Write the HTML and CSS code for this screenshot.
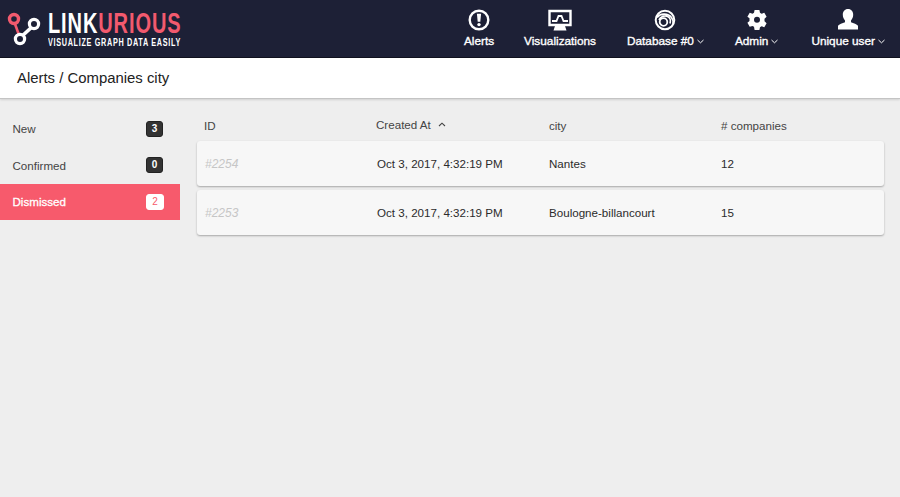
FILE: index.html
```html
<!DOCTYPE html>
<html lang="en">
<head>
<meta charset="utf-8">
<title>Alerts / Companies city</title>
<link rel="stylesheet" href="styles.css">
</head>
<body>
<header class="topbar">
  <div class="logo">
    <svg class="logo-mark" width="36" height="36" viewBox="0 0 36 36">
      <path d="M8 13 L12 24" stroke="#f25a6e" stroke-width="2.600" fill="none"/>
      <circle cx="7" cy="8" r="4.500" fill="none" stroke="#f25a6e" stroke-width="3.400"/>
      <path d="M14 26 L26 15" stroke="#fff" stroke-width="3.600" fill="none"/>
      <circle cx="13" cy="28" r="4.600" fill="#1d2036" stroke="#fff" stroke-width="3.200"/>
      <circle cx="27" cy="13" r="4.600" fill="#1d2036" stroke="#fff" stroke-width="3.200"/>
    </svg>
    <div class="logo-text">
      <div class="logo-name"><span class="logo-link">LINK</span><span class="logo-urious">URIOUS</span></div>
      <div class="logo-tag">VISUALIZE GRAPH DATA EASILY</div>
    </div>
  </div>
  <nav class="nav">
    <a class="nav-item nav-alerts">
      <svg width="22" height="22" viewBox="0 0 22 22"><circle cx="11" cy="11" r="9.300" fill="none" stroke="#fff" stroke-width="2.400"/><path d="M8.900 4.800h4.200l-.8 8h-2.600z" fill="#fff"/><circle cx="11" cy="15.600" r="1.700" fill="#fff"/></svg>
      <span>Alerts</span>
    </a>
    <a class="nav-item nav-vis">
      <svg width="24" height="22" viewBox="0 0 24 22"><path d="M1.500 2h21v14h-21z" fill="none" stroke="#fff" stroke-width="2.400"/><path d="M4 12h4.500l2-5h3l2 5H20" fill="none" stroke="#fff" stroke-width="1.800"/><path d="M7 17h10l1.500 4.500h-13z" fill="#fff"/></svg>
      <span>Visualizations</span>
    </a>
    <a class="nav-item nav-db">
      <svg width="22" height="22" viewBox="0 0 22 22"><circle cx="11" cy="11" r="9.300" fill="none" stroke="#fff" stroke-width="2"/><circle cx="9.500" cy="13" r="3.800" fill="none" stroke="#fff" stroke-width="1.800"/><path d="M3 8.500C6 4.500 13.500 3.500 17.500 8.500c1.500 2 2 4 1.500 6.500M5 11c1.500-3 5-5 8.500-3.500 2.500 1 3.500 4 2.500 7" fill="none" stroke="#fff" stroke-width="1.700"/></svg>
      <span>Database #0<svg class="caret" width="7" height="5" viewBox="0 0 7 5"><path d="M.5 1l3 2.800 3-2.800" fill="none" stroke="#fff"/></svg></span>
    </a>
    <a class="nav-item nav-admin">
      <svg width="22" height="22" viewBox="0 0 22 22"><path fill="#fff" fill-rule="evenodd" d="M8.600 1h4.800l.6 2.800 1.500.9 2.800-.9 2.300 4-2.100 1.900v2.600l2.100 1.900-2.300 4-2.800-.9-1.500.9-.6 2.800H8.600L8 17.800l-1.500-.9-2.800.9-2.300-4 2.100-1.900V9.300L1.400 7.800l2.300-4 2.800.9L8 3.800zM11 7.800a3 3 0 1 0 0 6 3 3 0 0 0 0-6z"/></svg>
      <span>Admin<svg class="caret" width="7" height="5" viewBox="0 0 7 5"><path d="M.5 1l3 2.800 3-2.800" fill="none" stroke="#fff"/></svg></span>
    </a>
    <a class="nav-item nav-user">
      <svg width="24" height="22" viewBox="0 0 24 22"><path fill="#fff" d="M12 0c3.300 0 5.200 2.500 5.200 5.800 0 2.300-1 4.400-2.200 5.600v1.800c2.500 1 6 1.900 7 3.600v3.700H2v-3.700c1-1.700 4.500-2.600 7-3.600v-1.800C7.800 10.200 6.800 8.100 6.800 5.800 6.800 2.500 8.700 0 12 0z"/></svg>
      <span>Unique user<svg class="caret" width="7" height="5" viewBox="0 0 7 5"><path d="M.5 1l3 2.800 3-2.800" fill="none" stroke="#fff"/></svg></span>
    </a>
  </nav>
</header>
<div class="titlebar">Alerts / Companies city</div>
<main class="content">
  <aside class="sidebar">
    <div class="side-item"><span>New</span><span class="badge">3</span></div>
    <div class="side-item"><span>Confirmed</span><span class="badge">0</span></div>
    <div class="side-item active"><span>Dismissed</span><span class="badge">2</span></div>
  </aside>
  <section class="table">
    <div class="thead">
      <div class="col">ID</div>
      <div class="col col-sorted">Created At<svg class="sort" width="8" height="5" viewBox="0 0 8 5"><path d="M1 4l3-2.800L7 4" fill="none" stroke="#444" stroke-width="1.100"/></svg></div>
      <div class="col">city</div>
      <div class="col">&#35; companies</div>
    </div>
    <div class="row">
      <div class="cell id">#2254</div>
      <div class="cell date">Oct 3, 2017, 4:32:19 PM</div>
      <div class="cell">Nantes</div>
      <div class="cell">12</div>
    </div>
    <div class="row">
      <div class="cell id">#2253</div>
      <div class="cell date">Oct 3, 2017, 4:32:19 PM</div>
      <div class="cell">Boulogne-billancourt</div>
      <div class="cell">15</div>
    </div>
  </section>
</main>
</body>
</html>
```
FILE: styles.css
```css
* { box-sizing: border-box; }
html, body { height: 100%; }
body {
  margin: 0;
  background: #eeeeee;
  color: #333;
  font-family: "Liberation Sans", Arial, sans-serif;
  font-size: 11.600px;
  overflow: hidden;
}
.topbar {
  height: 58px;
  background: #1d2036;
  border-bottom: 1px solid #11121f;
  display: flex;
  justify-content: space-between;
  color: #fff;
}
.logo { display: flex; padding: 11px 0 0 7px; }
.logo-mark { display: block; }
.logo-text { margin-left: 5px; transform: scaleX(.69); transform-origin: left top; width: 190px; }
.logo-name {
  font-size: 29px;
  font-weight: 700;
  line-height: 25px;
  letter-spacing: 1.300px;
  height: 25px;
  white-space: nowrap;
}
.logo-link { color: #fff; }
.logo-urious { color: #f25a6e; }
.logo-tag {
  font-weight: 700;
  font-size: 10.500px;
  line-height: 12px;
  letter-spacing: 1px;
  color: #fff;
  white-space: nowrap;
}
.nav { display: flex; }
.nav-item {
  display: flex;
  flex-direction: column;
  align-items: center;
  padding-top: 9px;
  font-size: 11.800px;
  line-height: 14px;
  white-space: nowrap;
  -webkit-text-stroke: .35px #fff;
}
.nav-item svg { display: block; }
.nav-item > span { margin-top: 3px; display: flex; align-items: center; }
.nav-item .caret { margin: 1px 0 0 3px; }
.nav-alerts { margin-right: 30px; }
.nav-vis { margin-right: 31px; }
.nav-db { margin-right: 31px; }
.nav-admin { margin-right: 33px; }
.nav-user { margin-right: 15px; }
.titlebar {
  height: 41px;
  background: #fff;
  border-bottom: 1px solid #c4c4c4;
  box-shadow: 0 1px 2px rgba(0,0,0,.12);
  padding-left: 17px;
  font-size: 14.900px;
  line-height: 41px;
  color: #222;
}
.content { display: flex; }
.sidebar { width: 180px; padding-top: 11.600px; flex: none; display: flex; flex-direction: column; }
.side-item {
  height: 36.600px;
  display: flex;
  align-items: center;
  justify-content: space-between;
  padding: 0 17px 0 12.500px;
  color: #444;
}
.badge {
  width: 17px;
  height: 16px;
  background: #333;
  border: 1px solid #222;
  border-radius: 3px;
  color: #fff;
  font-size: 10px;
  font-weight: 700;
  line-height: 14px;
  text-align: center;
}
.side-item.active {
  height: 36.400px;
  background: #f75a6c;
  color: #fff;
  padding-right: 16px;
  -webkit-text-stroke: .3px #fff;
}
.active .badge { background: #fff; border-color: #fff; color: #f75a6c; font-weight: 400; -webkit-text-stroke: 0; width: 18px; }
.table { width: 687px; margin-left: 17px; }
.thead {
  display: grid;
  grid-template-columns: 172px 173px 172px 1fr;
  padding: 0 0 9px 7px;
  height: 42px;
  align-items: end;
  color: #444;
}
.col-sorted { position: relative; top: -1px; }
.sort { margin-left: 7px; vertical-align: 2px; }
.row {
  display: grid;
  grid-template-columns: 173px 172px 172px 1fr;
  height: 45px;
  margin-bottom: 4px;
  padding-left: 7px;
  align-items: center;
  background: #f7f7f7;
  border-radius: 3px;
  box-shadow: 0 1px 2px rgba(0,0,0,.3);
  color: #2b2b2b;
}
.cell.id { color: #c6c6c6; font-style: italic; padding-left: 1px; font-size: 12px; }
```
